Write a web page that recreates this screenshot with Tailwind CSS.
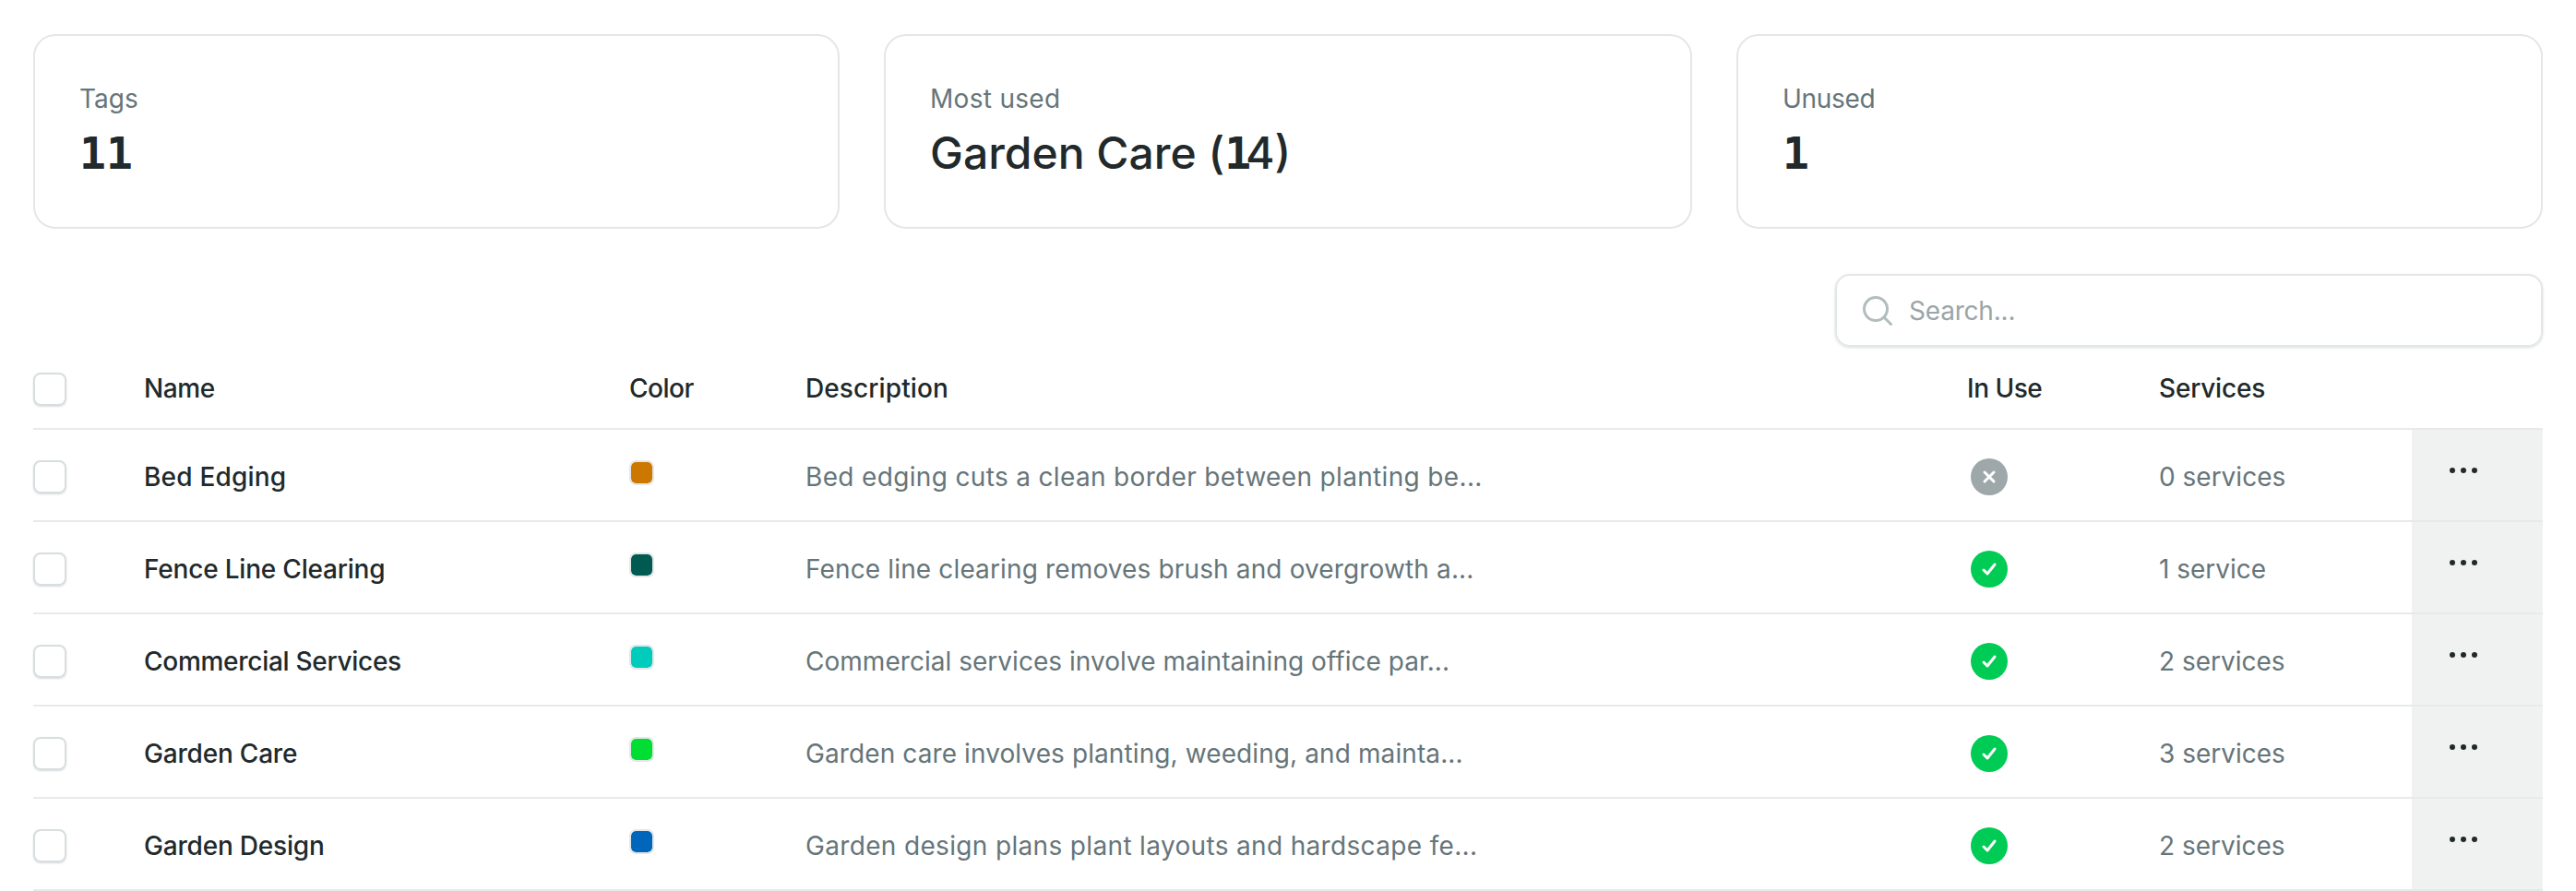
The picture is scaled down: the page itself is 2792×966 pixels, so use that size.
<!DOCTYPE html>
<html><head><meta charset="utf-8"><script src="https://cdn.jsdelivr.net/npm/@tailwindcss/browser@4"></script></head>
<body class="h-[966px] overflow-hidden bg-white font-['Inter',sans-serif] text-[#21292b]">
<div class="px-9 pt-[37px]">
<div class="grid grid-cols-[874px_876px_874px] gap-x-[48px]">
<div class="h-[211px] rounded-[24px] border-2 border-[#e4e7e7] px-12 pt-[50px]"><p class="text-[28px] leading-[36px] text-[#667579]">Tags</p><p class="mt-[13px] text-[48px] leading-[56px] font-medium"><span class="font-['DejaVu_Sans_Mono'] font-bold">11</span></p></div>
<div class="h-[211px] rounded-[24px] border-2 border-[#e4e7e7] px-12 pt-[50px]"><p class="text-[28px] leading-[36px] tracking-[0.3px] text-[#667579]">Most used</p><p class="mt-[13px] text-[48px] leading-[56px] font-medium">Garden Care (<span class="font-['DejaVu_Sans_Mono'] font-bold tracking-[-6px]">1</span>4)</p></div>
<div class="h-[211px] rounded-[24px] border-2 border-[#e4e7e7] px-12 pt-[50px]"><p class="text-[28px] leading-[36px] tracking-[-0.3px] text-[#667579]">Unused</p><p class="mt-[13px] text-[48px] leading-[56px] font-medium"><span class="font-['DejaVu_Sans_Mono'] font-bold">1</span></p></div>
</div>
<div class="mt-[49px] flex justify-end"><div class="flex h-[79px] w-[767px] items-center gap-[18px] rounded-[16px] border-2 border-[#e4e7e7] px-7 shadow-[0_1px_3px_rgba(60,80,90,0.2)]"><svg class="h-8 w-8 shrink-0 text-[#b3bdbe]" viewBox="0 0 32 32" fill="none" stroke="currentColor" stroke-width="3" stroke-linecap="round"><circle cx="14" cy="14" r="12.5"/><path d="m23.5 23.5 7 7"/></svg><span class="text-[28px] tracking-[-0.2px] text-[#9aa5a8]">Search...</span></div></div>

<div class="grid h-[90px] grid-cols-[120px_526px_191px_1259px_208px_274px_142px] items-center border-b-2 border-[#e8eaea] pt-[3px] text-[28px] font-medium">
<span class="h-9 w-9 rounded-[8px] border-2 border-[#d8dddf] shadow-[0_1px_2px_rgba(60,80,90,0.2)]"></span><span class="mb-[2px] tracking-[-0.4px]">Name</span><span class="mb-[2px] tracking-[-0.5px]">Color</span><span class="mb-[2px] tracking-[0.1px]">Description</span><span class="mb-[2px] tracking-[-0.5px]">In Use</span><span class="mb-[2px] tracking-[-0.2px]">Services</span><span></span>
</div>

<div class="grid h-[100px] grid-cols-[120px_526px_191px_1259px_208px_274px_142px] items-center border-b-2 border-[#e8eaea] text-[28px]">
<span class="mt-[3px] h-9 w-9 rounded-[8px] border-2 border-[#d8dddf] shadow-[0_1px_2px_rgba(60,80,90,0.2)]"></span><span class="mt-[3px] font-medium tracking-[0.2px]">Bed Edging</span><span class="mb-[6px] h-[27px] w-[27px] rounded-[7px] border-2 border-[#e4e7e7] bg-[#cc7700] bg-clip-padding"></span><span class="mt-[3px] tracking-[0.34px] text-[#667579]">Bed edging cuts a clean border between planting be...</span><span class="mt-[3px] ml-1 flex h-10 w-10 items-center justify-center rounded-full bg-[#9ea8ab]"><svg class="h-[18px] w-[18px]" viewBox="0 0 18 18" fill="none" stroke="#fff" stroke-width="3" stroke-linecap="round"><path d="m4 4 10 10M14 4 4 14"/></svg></span><span class="mt-[3px] text-[#667579]">0 services</span><span class="flex h-full items-center justify-center gap-[6px] bg-[#f0f2f1] pr-[30px] pb-[10px]"><i class="h-[6px] w-[6px] rounded-full bg-[#21292b]"></i><i class="h-[6px] w-[6px] rounded-full bg-[#21292b]"></i><i class="h-[6px] w-[6px] rounded-full bg-[#21292b]"></i></span>
</div>

<div class="grid h-[100px] grid-cols-[120px_526px_191px_1259px_208px_274px_142px] items-center border-b-2 border-[#e8eaea] text-[28px]">
<span class="mt-[3px] h-9 w-9 rounded-[8px] border-2 border-[#d8dddf] shadow-[0_1px_2px_rgba(60,80,90,0.2)]"></span><span class="mt-[3px] font-medium tracking-[-0.2px]">Fence Line Clearing</span><span class="mb-[6px] h-[27px] w-[27px] rounded-[7px] border-2 border-[#e4e7e7] bg-[#005a52] bg-clip-padding"></span><span class="mt-[3px] tracking-[0.14px] text-[#667579]">Fence line clearing removes brush and overgrowth a...</span><span class="mt-[3px] ml-1 flex h-10 w-10 items-center justify-center rounded-full bg-[#00cc55]"><svg class="h-5 w-5" viewBox="0 0 20 20" fill="none" stroke="#fff" stroke-width="3" stroke-linecap="round" stroke-linejoin="round"><path d="m4 11 4 4 8-10"/></svg></span><span class="mt-[3px] text-[#667579]">1 service</span><span class="flex h-full items-center justify-center gap-[6px] bg-[#f0f2f1] pr-[30px] pb-[10px]"><i class="h-[6px] w-[6px] rounded-full bg-[#21292b]"></i><i class="h-[6px] w-[6px] rounded-full bg-[#21292b]"></i><i class="h-[6px] w-[6px] rounded-full bg-[#21292b]"></i></span>
</div>

<div class="grid h-[100px] grid-cols-[120px_526px_191px_1259px_208px_274px_142px] items-center border-b-2 border-[#e8eaea] text-[28px]">
<span class="mt-[3px] h-9 w-9 rounded-[8px] border-2 border-[#d8dddf] shadow-[0_1px_2px_rgba(60,80,90,0.2)]"></span><span class="mt-[3px] font-medium tracking-[-0.28px]">Commercial Services</span><span class="mb-[6px] h-[27px] w-[27px] rounded-[7px] border-2 border-[#e4e7e7] bg-[#00ccbb] bg-clip-padding"></span><span class="mt-[3px] tracking-[0.03px] text-[#667579]">Commercial services involve maintaining office par...</span><span class="mt-[3px] ml-1 flex h-10 w-10 items-center justify-center rounded-full bg-[#00cc55]"><svg class="h-5 w-5" viewBox="0 0 20 20" fill="none" stroke="#fff" stroke-width="3" stroke-linecap="round" stroke-linejoin="round"><path d="m4 11 4 4 8-10"/></svg></span><span class="mt-[3px] text-[#667579]">2 services</span><span class="flex h-full items-center justify-center gap-[6px] bg-[#f0f2f1] pr-[30px] pb-[10px]"><i class="h-[6px] w-[6px] rounded-full bg-[#21292b]"></i><i class="h-[6px] w-[6px] rounded-full bg-[#21292b]"></i><i class="h-[6px] w-[6px] rounded-full bg-[#21292b]"></i></span>
</div>

<div class="grid h-[100px] grid-cols-[120px_526px_191px_1259px_208px_274px_142px] items-center border-b-2 border-[#e8eaea] text-[28px]">
<span class="mt-[3px] h-9 w-9 rounded-[8px] border-2 border-[#d8dddf] shadow-[0_1px_2px_rgba(60,80,90,0.2)]"></span><span class="mt-[3px] font-medium tracking-[-0.2px]">Garden Care</span><span class="mb-[6px] h-[27px] w-[27px] rounded-[7px] border-2 border-[#e4e7e7] bg-[#00dd33] bg-clip-padding"></span><span class="mt-[3px] tracking-[0.1px] text-[#667579]">Garden care involves planting, weeding, and mainta...</span><span class="mt-[3px] ml-1 flex h-10 w-10 items-center justify-center rounded-full bg-[#00cc55]"><svg class="h-5 w-5" viewBox="0 0 20 20" fill="none" stroke="#fff" stroke-width="3" stroke-linecap="round" stroke-linejoin="round"><path d="m4 11 4 4 8-10"/></svg></span><span class="mt-[3px] text-[#667579]">3 services</span><span class="flex h-full items-center justify-center gap-[6px] bg-[#f0f2f1] pr-[30px] pb-[10px]"><i class="h-[6px] w-[6px] rounded-full bg-[#21292b]"></i><i class="h-[6px] w-[6px] rounded-full bg-[#21292b]"></i><i class="h-[6px] w-[6px] rounded-full bg-[#21292b]"></i></span>
</div>

<div class="grid h-[100px] grid-cols-[120px_526px_191px_1259px_208px_274px_142px] items-center border-b-2 border-[#e8eaea] text-[28px]">
<span class="mt-[3px] h-9 w-9 rounded-[8px] border-2 border-[#d8dddf] shadow-[0_1px_2px_rgba(60,80,90,0.2)]"></span><span class="mt-[3px] font-medium tracking-[-0.2px]">Garden Design</span><span class="mb-[6px] h-[27px] w-[27px] rounded-[7px] border-2 border-[#e4e7e7] bg-[#0066bb] bg-clip-padding"></span><span class="mt-[3px] tracking-[0.34px] text-[#667579]">Garden design plans plant layouts and hardscape fe...</span><span class="mt-[3px] ml-1 flex h-10 w-10 items-center justify-center rounded-full bg-[#00cc55]"><svg class="h-5 w-5" viewBox="0 0 20 20" fill="none" stroke="#fff" stroke-width="3" stroke-linecap="round" stroke-linejoin="round"><path d="m4 11 4 4 8-10"/></svg></span><span class="mt-[3px] text-[#667579]">2 services</span><span class="flex h-full items-center justify-center gap-[6px] bg-[#f0f2f1] pr-[30px] pb-[10px]"><i class="h-[6px] w-[6px] rounded-full bg-[#21292b]"></i><i class="h-[6px] w-[6px] rounded-full bg-[#21292b]"></i><i class="h-[6px] w-[6px] rounded-full bg-[#21292b]"></i></span>
</div>
</div>
</body></html>
